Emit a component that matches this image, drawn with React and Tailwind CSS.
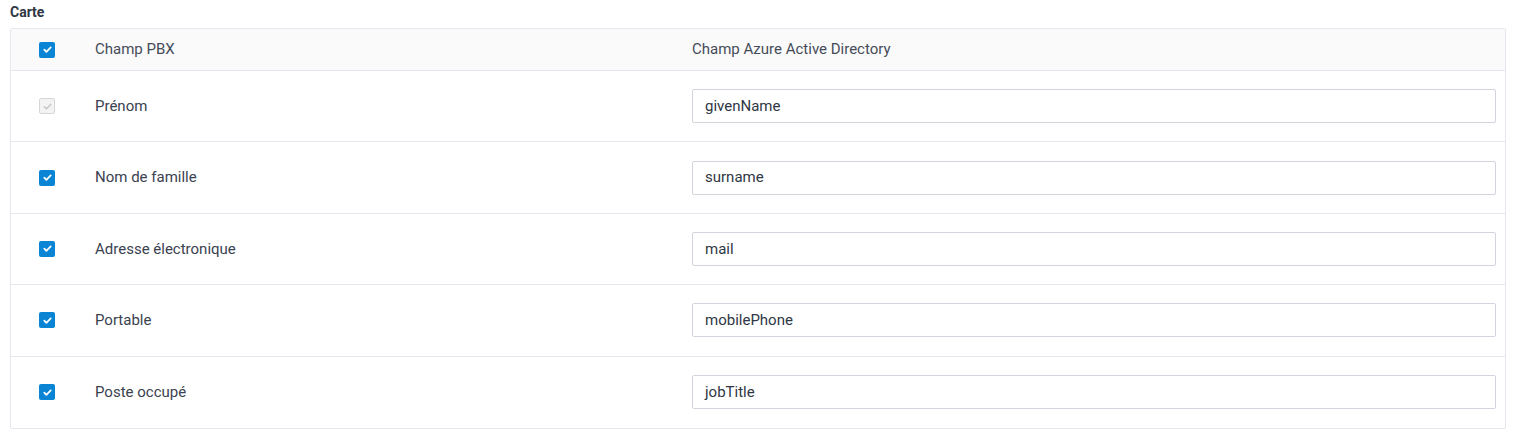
import React from "react";

const rows = [
  { label: "Prénom", value: "givenName", locked: true },
  { label: "Nom de famille", value: "surname" },
  { label: "Adresse électronique", value: "mail" },
  { label: "Portable", value: "mobilePhone" },
  { label: "Poste occupé", value: "jobTitle" },
];

function Check({ disabled }) {
  if (disabled) {
    return (
      <span className="flex h-4 w-4 items-center justify-center rounded-[2px] border border-[#d6d6d6] bg-[#f3f3f3]">
        <svg viewBox="0 0 12 12" className="h-[11px] w-[11px]" fill="none" stroke="#c4c4c4" strokeWidth="1.6" strokeLinecap="round" strokeLinejoin="round">
          <path d="M2.5 6.2l2.3 2.3 4.7-4.8" />
        </svg>
      </span>
    );
  }
  return (
    <span className="flex h-4 w-4 items-center justify-center rounded-[2px] bg-[#0a84d4]">
      <svg viewBox="0 0 12 12" className="h-[11px] w-[11px]" fill="none" stroke="#fff" strokeWidth="1.9" strokeLinecap="round" strokeLinejoin="round">
        <path d="M2.5 6.2l2.3 2.3 4.7-4.8" />
      </svg>
    </span>
  );
}

export default function App() {
  return (
    <div className="w-[1518px] h-[438px] bg-white pl-[10px] pr-[12px] font-['Roboto',sans-serif] text-[#3a4250]">
      <div className="h-[28px] pt-[2px] text-[14px] leading-[20px] font-bold text-[#2f3744]">Carte</div>
      <div className="border border-[#e6e6ee] rounded-[2px]">
        <div className="flex h-[42px] items-center border-b border-[#e6e6ee] bg-[#fafafa] text-[15px] text-[#454c59]">
          <div className="w-[84px] pl-[28px]"><Check /></div>
          <div className="w-[597px]">Champ PBX</div>
          <div>Champ Azure Active Directory</div>
        </div>
        {rows.map((r, i) => (
          <div
            key={r.value}
            className={"flex h-[71.4px] items-center text-[15px] " + (i < rows.length - 1 ? "border-b border-[#e6e6ee]" : "")}
          >
            <div className="w-[84px] pl-[28px]"><Check disabled={r.locked} /></div>
            <div className="w-[597px]">{r.label}</div>
            <div className="flex-1 pr-[9px]">
              <div className="flex h-[34px] items-center border border-[#d4d4de] rounded-[2px] px-[12px] text-[15px] text-[#2f3744]">
                {r.value}
              </div>
            </div>
          </div>
        ))}
      </div>
    </div>
  );
}
